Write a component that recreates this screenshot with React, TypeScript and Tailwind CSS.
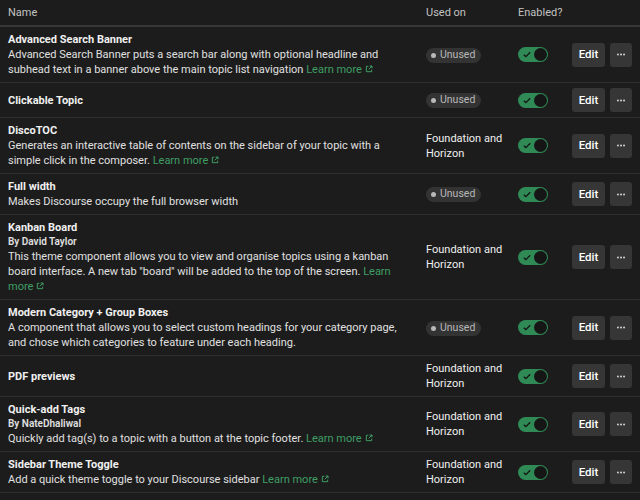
import React from 'react';

interface ThemeComponent {
  name: string;
  author?: string;
  description?: string;
  learnMore?: boolean;
  usedOn?: string;
}

const components: ThemeComponent[] = [
  {
    name: 'Advanced Search Banner',
    description:
      'Advanced Search Banner puts a search bar along with optional headline and subhead text in a banner above the main topic list navigation',
    learnMore: true,
  },
  { name: 'Clickable Topic' },
  {
    name: 'DiscoTOC',
    description:
      'Generates an interactive table of contents on the sidebar of your topic with a simple click in the composer.',
    learnMore: true,
    usedOn: 'Foundation and Horizon',
  },
  { name: 'Full width', description: 'Makes Discourse occupy the full browser width' },
  {
    name: 'Kanban Board',
    author: 'David Taylor',
    description:
      'This theme component allows you to view and organise topics using a kanban board interface. A new tab "board" will be added to the top of the screen.',
    learnMore: true,
    usedOn: 'Foundation and Horizon',
  },
  {
    name: 'Modern Category + Group Boxes',
    description:
      'A component that allows you to select custom headings for your category page, and chose which categories to feature under each heading.',
  },
  { name: 'PDF previews', usedOn: 'Foundation and Horizon' },
  {
    name: 'Quick-add Tags',
    author: 'NateDhaliwal',
    description: 'Quickly add tag(s) to a topic with a button at the topic footer.',
    learnMore: true,
    usedOn: 'Foundation and Horizon',
  },
  {
    name: 'Sidebar Theme Toggle',
    description: 'Add a quick theme toggle to your Discourse sidebar',
    learnMore: true,
    usedOn: 'Foundation and Horizon',
  },
];

const ExternalIcon = () => (
  <svg
    viewBox="0 0 12 12"
    className="inline-block w-[8px] h-[8px] ml-[3px] align-[0px]"
    fill="none"
    stroke="currentColor"
    strokeWidth="1.5"
  >
    <path d="M5 2H2v8h8V7" />
    <path d="M7 1.5h3.5V5M10.5 1.5 5.5 6.5" />
  </svg>
);

const Toggle = () => (
  <div className="w-[30px] h-[15px] rounded-full bg-[#2f8a56] flex items-center justify-between pl-[5px] pr-[1px]">
    <svg viewBox="0 0 10 8" className="w-[8px] h-[7px]" fill="none" stroke="#141414" strokeWidth="1.6">
      <path d="M1 4.2 3.6 6.6 9 1.2" />
    </svg>
    <div className="w-[13px] h-[13px] rounded-full bg-[#161616]" />
  </div>
);

const UnusedBadge = () => (
  <span className="inline-flex items-center gap-[4px] h-[15px] pl-[5px] pr-[6px] rounded-full bg-[#333333] text-[#b8b8b8] text-[10.5px] leading-none">
    <span className="w-[5px] h-[5px] rounded-full bg-[#b8b8b8]" />
    Unused
  </span>
);

export default function App() {
  return (
    <div
      className="min-h-screen bg-[#1c1c1c] text-[#e6e6e6] text-[11px] leading-[15px]"
      style={{ fontFamily: 'Roboto, "Liberation Sans", sans-serif' }}
    >
      {/* header */}
      <div className="grid grid-cols-[418px_92px_54px_1fr] h-[27px] items-center border-b-2 border-[#383838] text-[#c2c2c2] text-[11px]">
        <div className="px-2">Name</div>
        <div className="px-2">Used on</div>
        <div className="px-2 whitespace-nowrap">Enabled?</div>
        <div />
      </div>

      {components.map((c) => (
        <div
          key={c.name}
          className="grid grid-cols-[418px_92px_54px_1fr] items-center border-b border-[#2e2e2e]"
        >
          <div className="px-2 py-[5px]">
            <div className="font-bold text-[#f0f0f0]">{c.name}</div>
            {c.author && (
              <div className="text-[10px] font-semibold leading-[14px] text-[#e0e0e0]">
                By {c.author}
              </div>
            )}
            {c.description && (
              <div className="text-[#e0e0e0]">
                {c.description}
                {c.learnMore && (
                  <>
                    {' '}
                    <a className="text-[#3f9e64]">
                      Learn{' '}
                      <span className="whitespace-nowrap">
                        more
                        <ExternalIcon />
                      </span>
                    </a>
                  </>
                )}
              </div>
            )}
          </div>
          <div className="pl-2 py-[5px]">
            {c.usedOn ? <span className="text-[#f0f0f0]">{c.usedOn}</span> : <UnusedBadge />}
          </div>
          <div className="px-2 py-[5px]">
            <Toggle />
          </div>
          <div className="pl-2 pr-[7px] py-[5px] flex gap-[5px]">
            <button className="w-[33px] h-[24px] rounded-[3px] bg-[#363636] text-white text-[11.5px] font-medium">
              Edit
            </button>
            <button className="w-[22px] h-[24px] rounded-[3px] bg-[#363636] flex items-center justify-center">
              <svg viewBox="0 0 10 3" className="w-[8px] h-[3px]" fill="#e8e8e8">
                <circle cx="1.2" cy="1.5" r="1.1" />
                <circle cx="5" cy="1.5" r="1.1" />
                <circle cx="8.8" cy="1.5" r="1.1" />
              </svg>
            </button>
          </div>
        </div>
      ))}
    </div>
  );
}
